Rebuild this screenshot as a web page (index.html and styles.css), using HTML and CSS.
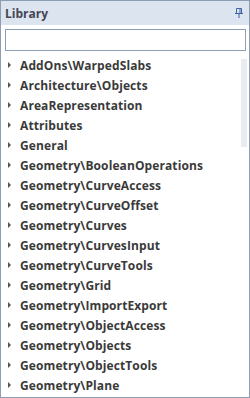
FILE: index.html
```html
<!DOCTYPE html>
<html>
<head>
<meta charset="utf-8">
<link rel="stylesheet" href="styles.css">
</head>
<body>
<div class="panel">
  <div class="header">
    <span class="title">Library</span>
    <svg class="pin" width="8" height="10" viewBox="0 0 8 10">
      <path d="M1.5 0.5 H6.5 V5.5 H1.5 Z M0 5.5 H8 M4 5.5 V10 M5 0.5 V5.5" fill="none" stroke="#3f64a5" stroke-width="1"/>
    </svg>
  </div>
  <div class="search"></div>
  <div class="list">
    <div class="row"><span class="tri"></span>AddOns\WarpedSlabs</div>
    <div class="row"><span class="tri"></span>Architecture\Objects</div>
    <div class="row"><span class="tri"></span>AreaRepresentation</div>
    <div class="row"><span class="tri"></span>Attributes</div>
    <div class="row"><span class="tri"></span>General</div>
    <div class="row"><span class="tri"></span>Geometry\BooleanOperations</div>
    <div class="row"><span class="tri"></span>Geometry\CurveAccess</div>
    <div class="row"><span class="tri"></span>Geometry\CurveOffset</div>
    <div class="row"><span class="tri"></span>Geometry\Curves</div>
    <div class="row"><span class="tri"></span>Geometry\CurvesInput</div>
    <div class="row"><span class="tri"></span>Geometry\CurveTools</div>
    <div class="row"><span class="tri"></span>Geometry\Grid</div>
    <div class="row"><span class="tri"></span>Geometry\ImportExport</div>
    <div class="row"><span class="tri"></span>Geometry\ObjectAccess</div>
    <div class="row"><span class="tri"></span>Geometry\Objects</div>
    <div class="row"><span class="tri"></span>Geometry\ObjectTools</div>
    <div class="row"><span class="tri"></span>Geometry\Plane</div>
    <div class="scrollbar"></div>
  </div>
</div>
</body>
</html>
```
FILE: styles.css
```css
html, body {
  margin: 0;
  padding: 0;
  background: #ffffff;
}
.panel {
  width: 250px;
  height: 398px;
  box-sizing: border-box;
  border: 1px solid #8d9db3;
  overflow: hidden;
  font-family: "Open Sans", "Noto Sans", sans-serif;
}
.header {
  height: 24px;
  background: #dce4ef;
  display: flex;
  align-items: center;
  justify-content: space-between;
  padding: 0 6px 0 4px;
}
.title {
  font-size: 12px;
  font-weight: 700;
  color: #454552;
}
.pin {
  display: block;
}
.search {
  height: 22px;
  box-sizing: border-box;
  margin: 4px 3px 0 4px;
  border: 1px solid #8d9db3;
  background: #ffffff;
}
.list {
  position: relative;
  margin-top: 4px;
}
.row {
  height: 20px;
  display: flex;
  align-items: center;
  padding-left: 7px;
  font-size: 12px;
  font-weight: 700;
  letter-spacing: 0.1px;
  color: #3a3a3a;
  white-space: nowrap;
}
.tri {
  width: 0;
  height: 0;
  border-top: 3px solid transparent;
  border-bottom: 3px solid transparent;
  border-left: 3px solid #555555;
  margin-right: 9px;
}
.scrollbar {
  position: absolute;
  left: 240px;
  top: 4px;
  width: 6px;
  height: 88px;
  background: #e8ecf0;
}
```
